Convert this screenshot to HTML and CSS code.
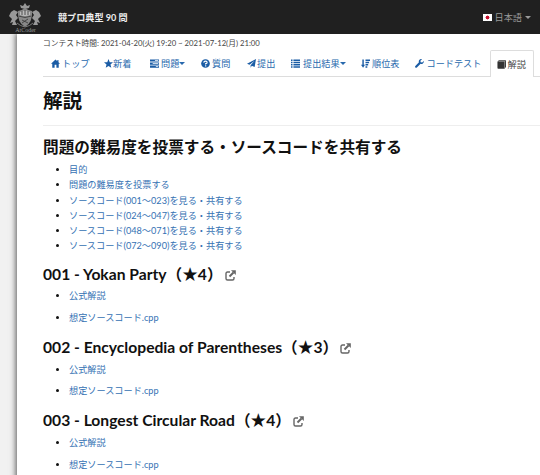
FILE: index.html
```
<!DOCTYPE html>
<html lang="ja">
<head>
<meta charset="utf-8">
<title>解説 - 競プロ典型 90 問</title>
<link rel="stylesheet" href="styles.css">
</head>
<body>
<header class="navbar">
  <svg class="logo" viewBox="0 0 34 31">
    <g fill="#999">
      <path d="M13 6l-1-3 3 1 2-3 2 3 3-1-1 3-4 1z"/>
      <path d="M10 9q3 0 7-3 4 3 7 3 1 11-7 16-8-5-7-16z" fill="#888"/>
      <path d="M1 14l2-4 3-2 4 2-2 3 2 3-3 3 2 4H4l1-3-3 1 2-4-2-2z"/>
      <path d="M33 14l-2-4-3-2-4 2 2 3-2 3 3 3-2 4h5l-1-3 3 1-2-4 2-2z"/>
    </g>
    <path d="M9 21q3 3 8 4 5-1 8-4" fill="none" stroke="#777" stroke-width="1"/>
    <path d="M12 10q5-3 10 0v3q-5 2-10 0z" fill="#bbb"/>
    <path d="M10.500 14q6.500 3 13 0M14 18l6 3M20 17l-6 4M14 9v4M17 8v5M20 9v4" fill="none" stroke="#333" stroke-width=".8"/>
    <text x="17.500" y="30" text-anchor="middle" class="logo-text">AtCoder</text>
  </svg>
  <span class="brand">競プロ典型 90 問</span>
  <div class="lang"><i class="flag"></i><span>日本語</span><i class="caret"></i></div>
</header>
<div class="page">
  <main class="sheet">
    <div class="time">コンテスト時間: 2021-04-20(火) 19:20 ~ 2021-07-12(月) 21:00</div>
    <nav class="tabs">
      <a class="tab home"><svg viewBox="0 0 10 10"><path d="M5 .5L0 5.3h1.4V9.6H4V6.5h2v3.1h2.6V5.3H10L8.3 3.7V1H7v1.4z"/></svg>トップ</a>
      <a class="tab news"><svg viewBox="0 0 10 10"><path d="M5 0l1.4 3.5 3.6.2-2.8 2.4.9 3.7L5 7.8 1.9 9.8l.9-3.7L0 3.7l3.6-.2z"/></svg>新着</a>
      <a class="tab tasks"><svg viewBox="0 0 10 10"><path d="M0 .5h10v2.4H0zM0 3.9h10v2.4H0zM0 7.3h10v2.4H0z"/><path d="M5.5 1.3h3.7v.8H5.5zM3 4.7h6.2v.8H3zM6.5 8.1h2.7v.8H6.5z" fill="#fff"/></svg>問題<i class="caret"></i></a>
      <a class="tab ask"><svg viewBox="0 0 10 10"><circle cx="5" cy="5" r="4.8"/><path d="M3.3 4Q3.2 2.4 5 2.4t1.8 1.5Q6.8 5 5.2 5.2v1M5.2 7v1.2" fill="none" stroke="#fff" stroke-width="1.3"/></svg>質問</a>
      <a class="tab submit"><svg viewBox="0 0 10 10"><path d="M10 0L8.5 9 5.3 7.6 4 9.8V7L8.4 2 2.8 6.4 0 5.2z"/></svg>提出</a>
      <a class="tab results"><svg viewBox="0 0 10 10"><path d="M0 .6h1.700v1.500H0zM2.700.6H10v1.500H2.700zM0 3.100h1.700v1.500H0zM2.700 3.100H10v1.500H2.700zM0 5.600h1.700v1.500H0zM2.700 5.600H10v1.500H2.700zM0 8.100h1.700v1.500H0zM2.700 8.100H10v1.500H2.700z"/></svg>提出結果<i class="caret"></i></a>
      <a class="tab ranks"><svg viewBox="0 0 10 10"><path d="M1.500.5h1.600v6H4.500L2.300 9.600 0 6.500h1.500zM5 .5h5v1.600H5zM5 3h4v1.600H5zM5 5.500h3v1.600H5zM5 8h2v1.600H5z"/></svg>順位表</a>
      <a class="tab code"><svg viewBox="0 0 10 10"><path d="M9.800 2.200L8 4 6.300 3.700 6 2 7.800.2Q5.600-.2 4.600 1.300q-.7 1.100-.2 2.400L.4 7.800q-.8 1 .1 1.700.8.7 1.600-.1l4.100-4q1.400.4 2.500-.5Q10.200 3.900 9.800 2.200z"/></svg>コードテスト</a>
      <a class="tab active"><svg viewBox="0 0 10 10"><path d="M2 .2h8v7.500L8.200 9.800H1.500Q.3 9.500.5 8.200V2z"/><path d="M1.500 1.500h7v7.500M8.500 1.500L9.500.8" fill="none" stroke="#ccc" stroke-width=".6"/></svg>解説</a>
    </nav>
    <h1>解説</h1>
    <section class="intro">
      <h2>問題の難易度を投票する・ソースコードを共有する</h2>
      <ul>
        <li><a>目的</a></li>
        <li><a>問題の難易度を投票する</a></li>
        <li><a>ソースコード(001〜023)を見る・共有する</a></li>
        <li><a>ソースコード(024〜047)を見る・共有する</a></li>
        <li><a>ソースコード(048〜071)を見る・共有する</a></li>
        <li><a>ソースコード(072〜090)を見る・共有する</a></li>
      </ul>
    </section>
    <section class="task">
      <h3>001 - Yokan Party（★4）<svg class="ext" viewBox="0 0 11 11"><path d="M5 2H2.500Q1 2 1 3.500v5Q1 10 2.500 10h5Q9 10 9 8.500V7"/><path d="M4.500 6.500L8.500 2.500" stroke-width="2"/><path d="M6 .3h4.800V5z" class="tip"/></svg></h3>
      <ul><li><a>公式解説</a></li><li><a>想定ソースコード.cpp</a></li></ul>
    </section>
    <section class="task">
      <h3>002 - Encyclopedia of Parentheses（★3）<svg class="ext" viewBox="0 0 11 11"><path d="M5 2H2.500Q1 2 1 3.500v5Q1 10 2.500 10h5Q9 10 9 8.500V7"/><path d="M4.500 6.500L8.500 2.500" stroke-width="2"/><path d="M6 .3h4.800V5z" class="tip"/></svg></h3>
      <ul><li><a>公式解説</a></li><li><a>想定ソースコード.cpp</a></li></ul>
    </section>
    <section class="task">
      <h3>003 - Longest Circular Road（★4）<svg class="ext" viewBox="0 0 11 11"><path d="M5 2H2.500Q1 2 1 3.500v5Q1 10 2.500 10h5Q9 10 9 8.500V7"/><path d="M4.500 6.500L8.500 2.500" stroke-width="2"/><path d="M6 .3h4.800V5z" class="tip"/></svg></h3>
      <ul><li><a>公式解説</a></li><li><a>想定ソースコード.cpp</a></li></ul>
    </section>
  </main>
</div>
</body>
</html>
```
FILE: styles.css
```
* { box-sizing: border-box; }
body {
  margin: 0;
  height: 475px;
  overflow: hidden;
  background: #f1f1f1;
  color: #111;
  font: 9.17px/15px Lato, "Noto Sans CJK JP", sans-serif;
  white-space: nowrap;
}
.navbar {
  display: flex;
  align-items: center;
  height: 34px;
  padding: 0 9px 0 8px;
  background: #202020;
}
.logo { width: 34px; height: 31px; flex: none; }
.logo-text { font: 6px "Liberation Serif", serif; fill: #999; }
.brand { margin-left: 16px; color: #eee; font-size: 9.1px; font-weight: 700; }
.lang { display: flex; align-items: center; margin-left: auto; color: #999; }
.flag {
  width: 9px;
  height: 7px;
  margin-right: 3px;
  background: radial-gradient(circle, #c8102e 0 1.7px, #fff 2.2px);
}
.caret {
  display: inline-block;
  flex: none;
  width: 0;
  height: 0;
  border-style: solid;
  border-width: 3px 3px 0;
  border-color: currentColor transparent transparent;
}
.lang .caret { margin-left: 3px; }
.page { height: 441px; padding-left: 17px; overflow: hidden; }
.sheet {
  height: 460px;
  padding: 3px 0 0 26px;
  background: #fff;
  box-shadow: 0 0 6px 1px #555;
}
.time { height: 13px; font-size: 7.73px; line-height: 13px; color: #444; }
.tabs { display: flex; height: 27px; border-bottom: 1px solid #ddd; }
.tab {
  display: flex;
  align-items: center;
  flex: none;
  height: 27px;
  padding-left: 8px;
  color: #2869ad;
}
.tab svg { width: 9px; height: 9px; margin-right: 2px; fill: #1a5ca5; flex: none; }
.home { width: 53px; }
.news { width: 46px; }
.news svg { margin-right: 0; }
.tasks { width: 51px; }
.ask { width: 46px; }
.submit { width: 44px; }
.submit svg { margin-right: 1px; }
.results { width: 70px; }
.results svg { margin-right: 3px; }
.ranks { width: 53.5px; }
.ranks svg { margin-right: 2px; }
.code { width: 83px; }
.code svg { margin-right: 3px; }
.tab.active {
  width: 44px;
  padding-left: 6px;
  border: 1px solid #ddd;
  border-bottom: 0;
  border-radius: 2px 2px 0 0;
  background: #fff;
  color: #444;
}
.active svg { fill: #333; }
h1, h2, h3, ul { margin: 0; }
h1 { height: 49px; padding-top: 11px; border-bottom: 1px solid #eee; font-size: 19.5px; line-height: 26px; }
h2 { height: 36px; padding-top: 11px; font-size: 15.65px; line-height: 20px; }
h3 {
  display: flex;
  align-items: center;
  height: 25px;
  font-size: 15.65px;
  line-height: 25px;
}
ul { padding-left: 26px; }
li { height: 15.1px; line-height: 15.1px; }
li::marker { color: #111; }
a { color: #3471b3; }
.intro { height: 135.7px; }
.intro ul { padding-top: .4px; }
.task { height: 73.4px; }
.task ul { padding-top: 1.5px; }
.task li { height: 21.8px; }
.ext { width: 11px; height: 11px; margin-top: 2px; margin-left: 2px; fill: none; stroke: #666; stroke-width: 1.4; }
.ext .tip { fill: #666; stroke: none; }
```
